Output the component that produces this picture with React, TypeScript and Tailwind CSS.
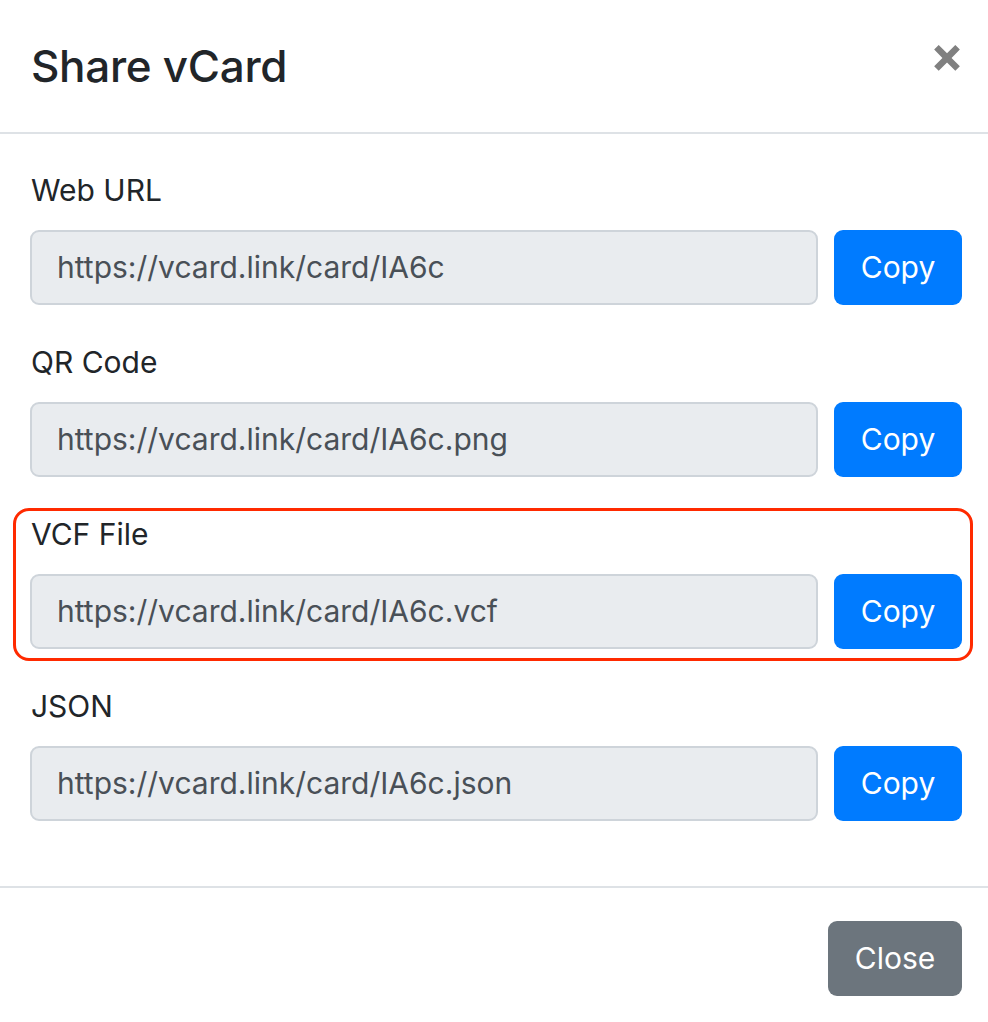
import React from "react";

const rows = [
  { label: "Web URL", url: "https://vcard.link/card/IA6c" },
  { label: "QR Code", url: "https://vcard.link/card/IA6c.png" },
  { label: "VCF File", url: "https://vcard.link/card/IA6c.vcf" },
  { label: "JSON", url: "https://vcard.link/card/IA6c.json" },
];

export default function App() {
  return (
    <div
      className="relative w-[988px] h-[1022px] bg-white text-[#212529] overflow-hidden"
      style={{ fontFamily: "Inter, 'Liberation Sans', sans-serif" }}
    >
      <div className="h-[134px] flex items-start justify-between pl-[31px] pr-[26px] border-b-2 border-[#dee2e6]">
        <h5 className="mt-[36px] text-[44px] leading-[60px] font-medium tracking-[-0.3px]">Share vCard</h5>
        <button className="mt-[22px] mr-[-2px] text-[50px] leading-[64px] font-bold text-[#808080]">×</button>
      </div>
      <div className="pl-[30px] pr-[26px] pt-[32px] pb-[32px]">
        {rows.map((r) => (
          <div key={r.label} className="mb-[33px]">
            <label className="block pl-[1px] text-[30px] leading-[48px] mb-[16px]">{r.label}</label>
            <div className="flex gap-[16px]">
              <div className="flex-1 h-[75px] flex items-center px-[25px] bg-[#e9ecef] border-2 border-[#ced4da] rounded-[9px] text-[30px] text-[#495057]">
                {r.url}
              </div>
              <button className="w-[128px] h-[75px] rounded-[9px] bg-[#007bff] text-white text-[30px]">Copy</button>
            </div>
          </div>
        ))}
      </div>
      <div className="border-t-2 border-[#dee2e6] flex justify-end px-[26px] pt-[33px]">
        <button className="w-[134px] h-[75px] rounded-[9px] bg-[#6c757d] text-white text-[30px]">Close</button>
      </div>
      <div className="absolute left-[13px] top-[508px] w-[960px] h-[153px] border-[3px] border-[#ff2a00] rounded-[16px]" />
    </div>
  );
}
